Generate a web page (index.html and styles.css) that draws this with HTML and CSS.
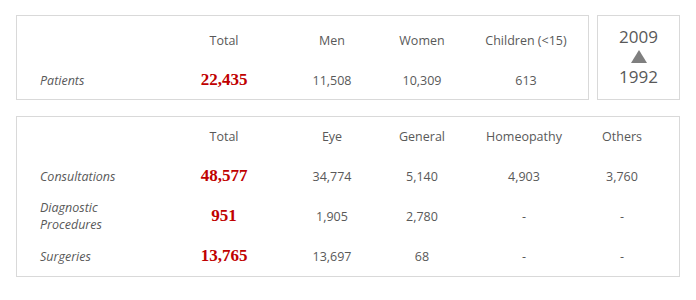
FILE: index.html
```html
<!DOCTYPE html>
<html>
<head>
<meta charset="utf-8">
<link rel="stylesheet" href="styles.css">
</head>
<body>
<div class="wrap">
  <div class="top">
    <div class="box grid grid-a">
      <div class="cell"></div>
      <div class="cell head">Total</div>
      <div class="cell head">Men</div>
      <div class="cell head">Women</div>
      <div class="cell head">Children (&lt;15)</div>
      <div class="cell label">Patients</div>
      <div class="cell total">22,435</div>
      <div class="cell num">11,508</div>
      <div class="cell num">10,309</div>
      <div class="cell num">613</div>
    </div>
    <div class="box years">
      <div class="year">2009</div>
      <div class="tri"></div>
      <div class="year">1992</div>
    </div>
  </div>
  <div class="box grid grid-b">
    <div class="cell"></div>
    <div class="cell head">Total</div>
    <div class="cell head">Eye</div>
    <div class="cell head">General</div>
    <div class="cell head">Homeopathy</div>
    <div class="cell head">Others</div>

    <div class="cell label">Consultations</div>
    <div class="cell total">48,577</div>
    <div class="cell num">34,774</div>
    <div class="cell num">5,140</div>
    <div class="cell num">4,903</div>
    <div class="cell num">3,760</div>

    <div class="cell label">Diagnostic<br>Procedures</div>
    <div class="cell total">951</div>
    <div class="cell num">1,905</div>
    <div class="cell num">2,780</div>
    <div class="cell num">-</div>
    <div class="cell num">-</div>

    <div class="cell label">Surgeries</div>
    <div class="cell total">13,765</div>
    <div class="cell num">13,697</div>
    <div class="cell num">68</div>
    <div class="cell num">-</div>
    <div class="cell num">-</div>
  </div>
</div>
</body>
</html>
```
FILE: styles.css
```css
html, body {
  margin: 0;
  padding: 0;
  background: #ffffff;
}
body {
  padding: 15px 0 0 16px;
  font-family: "Open Sans", "Liberation Sans", sans-serif;
  color: #595959;
  font-size: 12.5px;
}
.wrap {
  width: 664px;
  display: flex;
  flex-direction: column;
  gap: 16px;
}
.top {
  display: flex;
  gap: 8px;
}
.box {
  border: 1px solid #d9d9d9;
  box-sizing: border-box;
}
.grid {
  display: grid;
  align-items: center;
}
.grid-a {
  width: 573px;
  height: 85px;
  padding-top: 4px;
  grid-template-columns: 159px 96px 120px 60px 148px;
  grid-template-rows: 40px 40px;
}
.grid-b {
  width: 664px;
  height: 161px;
  grid-template-columns: 159px 96px 120px 60px 144px 52px;
  grid-template-rows: 39px 40px 40px 40px;
}
.cell {
  text-align: center;
  white-space: nowrap;
}
.label {
  text-align: left;
  padding-left: 23px;
  font-style: italic;
  line-height: 17px;
}
.total {
  font-family: "Liberation Serif", serif;
  font-weight: bold;
  font-size: 17px;
  color: #c00000;
}
.years {
  width: 83px;
  height: 85px;
  display: flex;
  flex-direction: column;
  align-items: center;
  padding-top: 11px;
}
.year {
  font-size: 17px;
  line-height: 20px;
  color: #595959;
}
.tri {
  width: 0;
  height: 0;
  border-left: 8px solid transparent;
  border-right: 8px solid transparent;
  border-bottom: 13px solid #7f7f7f;
  margin: 3px 0 4px;
}
```
